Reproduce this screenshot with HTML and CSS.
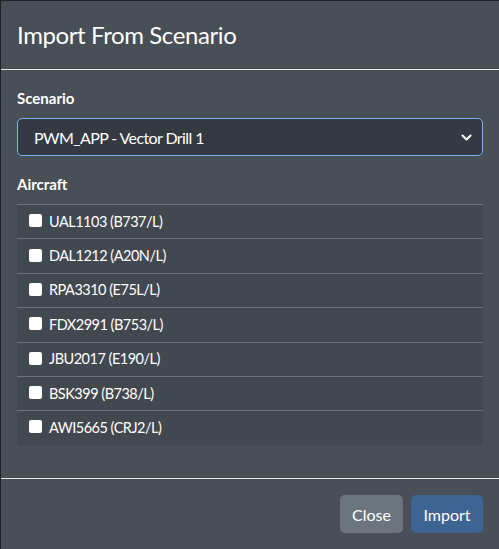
FILE: index.html
```html
<!DOCTYPE html>
<html lang="en">

<head>
    <meta charset="UTF-8">
    <meta name="viewport" content="width=device-width, initial-scale=1.0">
    <title>Import From Scenario</title>
    <link rel="stylesheet" href="styles.css">
</head>

<body>
    <div class="modal-content">
        <div class="modal-header">
            <h5 class="modal-title">Import From Scenario</h5>
        </div>
        <div class="modal-body">
            <label class="form-label" for="scenario">Scenario</label>
            <select id="scenario" class="form-select">
                <option>PWM_APP - Vector Drill 1</option>
            </select>
            <div class="form-label section-label">Aircraft</div>
            <ul class="aircraft-list">
                <li class="aircraft-item"><label><input type="checkbox"> UAL1103 (B737/L)</label></li>
                <li class="aircraft-item"><label><input type="checkbox"> DAL1212 (A20N/L)</label></li>
                <li class="aircraft-item"><label><input type="checkbox"> RPA3310 (E75L/L)</label></li>
                <li class="aircraft-item"><label><input type="checkbox"> FDX2991 (B753/L)</label></li>
                <li class="aircraft-item"><label><input type="checkbox"> JBU2017 (E190/L)</label></li>
                <li class="aircraft-item"><label><input type="checkbox"> BSK399 (B738/L)</label></li>
                <li class="aircraft-item"><label><input type="checkbox"> AWI5665 (CRJ2/L)</label></li>
            </ul>
        </div>
        <div class="modal-footer">
            <button class="btn btn-secondary">Close</button>
            <button class="btn btn-primary">Import</button>
        </div>
    </div>
</body>

</html>
```

FILE: styles.css
```css
:root {
    background-color: #1f2226;
    font-family: 'Lato', 'Open Sans', sans-serif;
    color: #fff;
}

body {
    margin: 0;
    height: 549px;
}

.modal-content {
    height: 548px;
    border-top: 1px solid #1f2226;
    border-left: 1px solid #1f2226;
    background-color: #484f56;
    display: flex;
    flex-direction: column;
}

.modal-header {
    padding: 16px;
    border-bottom: 1px solid #e6e8ea;
}

.modal-title {
    margin: 0;
    font-size: 24px;
    font-weight: 400;
    line-height: 36px;
    letter-spacing: -0.4px;
}

.modal-body {
    padding: 16px;
    flex: 1;
}

.form-label {
    display: block;
    font-weight: 700;
    font-size: 15px;
    line-height: 24px;
    margin-bottom: 8px;
}

.section-label {
    margin-top: 16px;
}

.form-select {
    appearance: none;
    display: block;
    width: 100%;
    height: 38px;
    padding: 0 36px 0 16px;
    font-family: inherit;
    font-size: 16px;
    letter-spacing: -0.6px;
    color: #fff;
    background-color: #353a42;
    border: 1px solid #7cb2f2;
    border-radius: 5px;
    box-sizing: border-box;
    background-image: url("data:image/svg+xml,%3Csvg xmlns='http://www.w3.org/2000/svg' viewBox='0 0 16 16'%3E%3Cpath fill='none' stroke='%23fff' stroke-linecap='round' stroke-linejoin='round' stroke-width='2.5' d='M3 5.5l5 5 5-5'/%3E%3C/svg%3E");
    background-repeat: no-repeat;
    background-position: right 9px center;
    background-size: 13px 13px;
}

.aircraft-list {
    list-style: none;
    margin: 0 0 16px;
    padding: 0;
}

.aircraft-item {
    background-color: #42484f;
    border-top: 1px solid #6b727a;
    padding: 4.7px 12px;
    font-size: 14.5px;
    letter-spacing: -0.5px;
    line-height: 24px;
}

.aircraft-item label {
    display: flex;
    align-items: center;
}

.aircraft-item input {
    appearance: none;
    width: 13px;
    height: 13px;
    margin: 0 7px 2px 0;
    background-color: #fff;
    border-radius: 2px;
}

.modal-footer {
    border-top: 1px solid #e6e8ea;
    padding: 16px 16px 16px 0;
    display: flex;
    justify-content: flex-end;
    gap: 8px;
}

.btn {
    height: 38px;
    padding: 0 12px;
    border: 0;
    border-radius: 5px;
    font-family: inherit;
    font-size: 16px;
    color: #fff;
}

.btn-secondary {
    background-color: #6c757d;
}

.btn-primary {
    min-width: 72px;
    background-color: #3d6493;
}
```
